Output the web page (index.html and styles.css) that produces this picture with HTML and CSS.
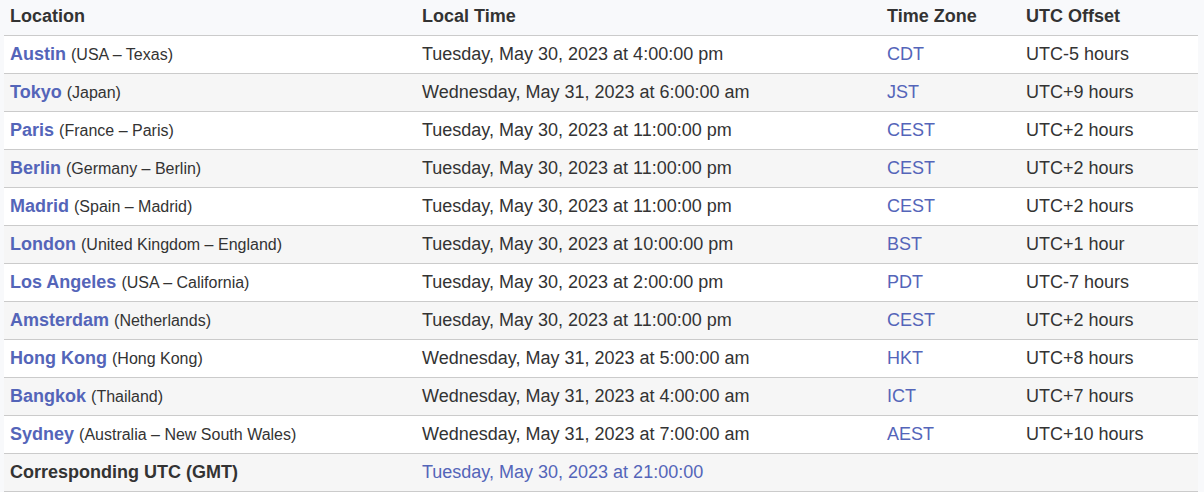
FILE: index.html
```html
<!DOCTYPE html>
<html lang="en">
<head>
  <meta charset="UTF-8" />
  <meta name="viewport" content="width=device-width, initial-scale=1.0"/>
  <title>World Clock</title>
  <link rel="stylesheet" href="styles.css">
</head>
<body>
  <table class="clock-table">
    <thead>
      <tr>
        <th class="col-loc">Location</th>
        <th class="col-time">Local Time</th>
        <th class="col-zone">Time Zone</th>
        <th class="col-off">UTC Offset</th>
      </tr>
    </thead>
    <tbody>
      <tr>
        <td><a class="city" href="#">Austin</a> <span class="region">(USA – Texas)</span></td>
        <td>Tuesday, May 30, 2023 at 4:00:00 pm</td>
        <td><a class="zone" href="#">CDT</a></td>
        <td>UTC-5 hours</td>
      </tr>
      <tr>
        <td><a class="city" href="#">Tokyo</a> <span class="region">(Japan)</span></td>
        <td>Wednesday, May 31, 2023 at 6:00:00 am</td>
        <td><a class="zone" href="#">JST</a></td>
        <td>UTC+9 hours</td>
      </tr>
      <tr>
        <td><a class="city" href="#">Paris</a> <span class="region">(France – Paris)</span></td>
        <td>Tuesday, May 30, 2023 at 11:00:00 pm</td>
        <td><a class="zone" href="#">CEST</a></td>
        <td>UTC+2 hours</td>
      </tr>
      <tr>
        <td><a class="city" href="#">Berlin</a> <span class="region">(Germany – Berlin)</span></td>
        <td>Tuesday, May 30, 2023 at 11:00:00 pm</td>
        <td><a class="zone" href="#">CEST</a></td>
        <td>UTC+2 hours</td>
      </tr>
      <tr>
        <td><a class="city" href="#">Madrid</a> <span class="region">(Spain – Madrid)</span></td>
        <td>Tuesday, May 30, 2023 at 11:00:00 pm</td>
        <td><a class="zone" href="#">CEST</a></td>
        <td>UTC+2 hours</td>
      </tr>
      <tr>
        <td><a class="city" href="#">London</a> <span class="region">(United Kingdom – England)</span></td>
        <td>Tuesday, May 30, 2023 at 10:00:00 pm</td>
        <td><a class="zone" href="#">BST</a></td>
        <td>UTC+1 hour</td>
      </tr>
      <tr>
        <td><a class="city" href="#">Los Angeles</a> <span class="region">(USA – California)</span></td>
        <td>Tuesday, May 30, 2023 at 2:00:00 pm</td>
        <td><a class="zone" href="#">PDT</a></td>
        <td>UTC-7 hours</td>
      </tr>
      <tr>
        <td><a class="city" href="#">Amsterdam</a> <span class="region">(Netherlands)</span></td>
        <td>Tuesday, May 30, 2023 at 11:00:00 pm</td>
        <td><a class="zone" href="#">CEST</a></td>
        <td>UTC+2 hours</td>
      </tr>
      <tr>
        <td><a class="city" href="#">Hong Kong</a> <span class="region">(Hong Kong)</span></td>
        <td>Wednesday, May 31, 2023 at 5:00:00 am</td>
        <td><a class="zone" href="#">HKT</a></td>
        <td>UTC+8 hours</td>
      </tr>
      <tr>
        <td><a class="city" href="#">Bangkok</a> <span class="region">(Thailand)</span></td>
        <td>Wednesday, May 31, 2023 at 4:00:00 am</td>
        <td><a class="zone" href="#">ICT</a></td>
        <td>UTC+7 hours</td>
      </tr>
      <tr>
        <td><a class="city" href="#">Sydney</a> <span class="region">(Australia – New South Wales)</span></td>
        <td>Wednesday, May 31, 2023 at 7:00:00 am</td>
        <td><a class="zone" href="#">AEST</a></td>
        <td>UTC+10 hours</td>
      </tr>
      <tr>
        <td><strong>Corresponding UTC (GMT)</strong></td>
        <td><a class="zone" href="#">Tuesday, May 30, 2023 at 21:00:00</a></td>
        <td></td>
        <td></td>
      </tr>
    </tbody>
  </table>
</body>
</html>
```

FILE: styles.css
```css
:root {
  --bg: #f8f9fb;
  --row: white;
  --row-alt: #f6f6f6;
  --text: #333;
  --link: #5465b9;
  --border: #cbcbcb;
}

body {
  margin: 0;
  background-color: var(--bg);
  color: var(--text);
  font-family: 'Liberation Sans', Arial, sans-serif;
  font-size: 18px;
}

.clock-table {
  margin: 0 4px;
  width: 1194px;
  border-collapse: separate;
  border-spacing: 0;
  table-layout: fixed;
}

/* widths are content widths, cells add 12px padding */
.col-loc { width: 400px; }
.col-time { width: 453px; }
.col-zone { width: 127px; }
.col-off { width: 166px; }

th {
  text-align: left;
  font-weight: bold;
  padding: 6px 6px 8px;
  line-height: 21px;
  border-bottom: 1px solid var(--border);
}

td {
  padding: 8px 6px;
  line-height: 21px;
  border-bottom: 1px solid var(--border);
  background: var(--row);
  white-space: nowrap;
}

tbody tr:nth-child(even) td {
  background: var(--row-alt);
}

a {
  color: var(--link);
  text-decoration: none;
}

.city {
  font-weight: bold;
}

.region {
  font-size: 16px;
}
```
